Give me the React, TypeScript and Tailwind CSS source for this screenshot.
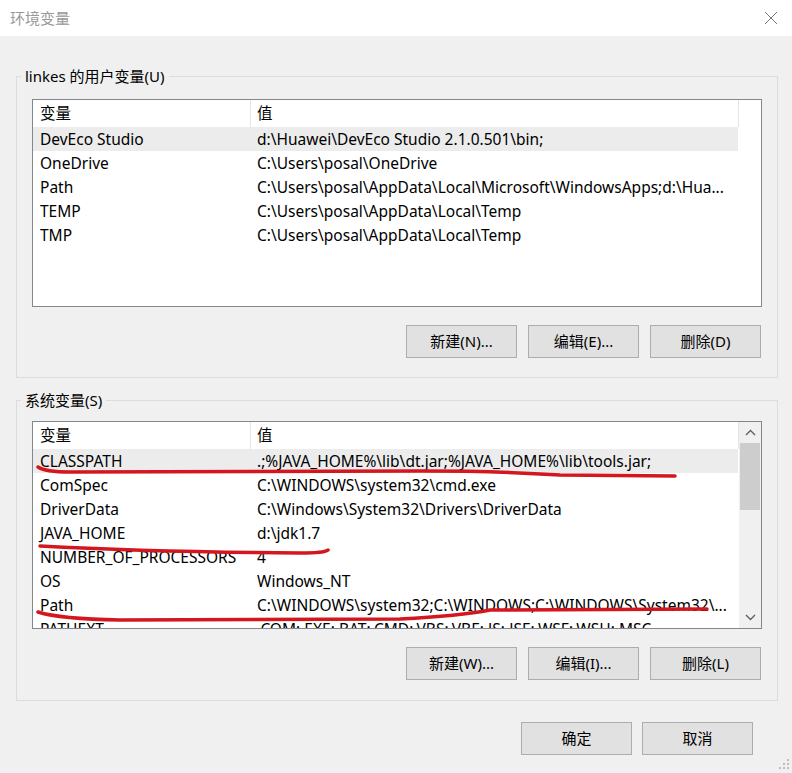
import React from "react";

type Item = { name: string; value: string; selected?: boolean };

const userVars: Item[] = [
  { name: "DevEco Studio", value: "d:\\Huawei\\DevEco Studio 2.1.0.501\\bin;", selected: true },
  { name: "OneDrive", value: "C:\\Users\\posal\\OneDrive" },
  { name: "Path", value: "C:\\Users\\posal\\AppData\\Local\\Microsoft\\WindowsApps;d:\\Hua..." },
  { name: "TEMP", value: "C:\\Users\\posal\\AppData\\Local\\Temp" },
  { name: "TMP", value: "C:\\Users\\posal\\AppData\\Local\\Temp" },
];

const sysVars: Item[] = [
  { name: "CLASSPATH", value: ".;%JAVA_HOME%\\lib\\dt.jar;%JAVA_HOME%\\lib\\tools.jar;", selected: true },
  { name: "ComSpec", value: "C:\\WINDOWS\\system32\\cmd.exe" },
  { name: "DriverData", value: "C:\\Windows\\System32\\Drivers\\DriverData" },
  { name: "JAVA_HOME", value: "d:\\jdk1.7" },
  { name: "NUMBER_OF_PROCESSORS", value: "4" },
  { name: "OS", value: "Windows_NT" },
  { name: "Path", value: "C:\\WINDOWS\\system32;C:\\WINDOWS;C:\\WINDOWS\\System32\\..." },
  { name: "PATHEXT", value: ".COM;.EXE;.BAT;.CMD;.VBS;.VBE;.JS;.JSE;.WSF;.WSH;.MSC" },
];

function Button({ label }: { label: string }) {
  return (
    <button className="h-[33px] w-[111px] shrink-0 border border-[#adadad] bg-[#e1e1e1] text-[15px] text-black">
      {label}
    </button>
  );
}

function Scrollbar() {
  return (
    <div className="flex w-[22px] shrink-0 flex-col bg-[#f0f0f0]">
      <div className="flex h-[21px] items-center justify-center">
        <svg width="11" height="7" viewBox="0 0 11 7">
          <path d="M1 6 L5.5 1.5 L10 6" fill="none" stroke="#606060" strokeWidth="1.4" />
        </svg>
      </div>
      <div className="mx-[1px] h-[67px] bg-[#cdcdcd]" />
      <div className="flex-1" />
      <div className="flex h-[21px] items-center justify-center">
        <svg width="11" height="7" viewBox="0 0 11 7">
          <path d="M1 1 L5.5 5.5 L10 1" fill="none" stroke="#606060" strokeWidth="1.4" />
        </svg>
      </div>
    </div>
  );
}

function ListView({ items, scroll }: { items: Item[]; scroll?: boolean }) {
  return (
    <div className="flex h-[208px] overflow-hidden border border-[#828790] bg-white text-[15.5px]">
      <div className="w-[705px] shrink-0">
        <div className="flex h-[27px]">
          <div className="flex w-[218px] shrink-0 items-center border-r border-[#e5e5e5] pl-[7px]">变量</div>
          <div className="flex w-[488px] shrink-0 items-center border-r border-[#e5e5e5] pl-[6px]">值</div>
        </div>
        {items.map((it) => (
          <div
            key={it.name}
            className={`flex h-6 items-center whitespace-nowrap pt-px ${it.selected ? "bg-[#ececec]" : ""}`}
          >
            <div className="w-[218px] shrink-0 overflow-hidden pl-[7px]">{it.name}</div>
            <div className="w-[487px] shrink-0 overflow-hidden pl-[6px]">{it.value}</div>
          </div>
        ))}
      </div>
      {scroll && <div className="ml-auto flex"><Scrollbar /></div>}
    </div>
  );
}

function Group({
  title,
  items,
  buttons,
  scroll,
  className,
}: {
  title: string;
  items: Item[];
  buttons: string[];
  scroll?: boolean;
  className: string;
}) {
  return (
    <fieldset className={`w-[762px] border border-[#dcdcdc] ${className}`}>
      <legend className="ml-[4px] px-[4px] text-[15px] leading-[20px] text-black">{title}</legend>
      <div className={`px-[15px] ${scroll ? "pt-[11px] pb-[20px]" : "pt-[13px] pb-[19px]"}`}>
        <ListView items={items} scroll={scroll} />
        <div className="mt-[18px] flex justify-end gap-[11px] pr-[1px]">
          {buttons.map((b) => (
            <Button key={b} label={b} />
          ))}
        </div>
      </div>
    </fieldset>
  );
}

export default function App() {
  return (
    <div className="relative h-[773px] w-[792px] overflow-hidden bg-[#f0f0f0] font-['Noto_Sans','Noto_Sans_CJK_SC',sans-serif] text-[15px] text-black">
      {/* title bar */}
      <div className="flex h-9 items-center justify-between bg-white pl-[10px] pr-[14px]">
        <span className="text-[15px] text-[#999999]">环境变量</span>
        <svg width="14" height="14" viewBox="0 0 14 14">
          <path d="M1 1 L13 13 M13 1 L1 13" stroke="#777777" strokeWidth="1" />
        </svg>
      </div>

      <div className="pl-4 pt-[30px]">
        <Group
          title="linkes 的用户变量(U)"
          items={userVars}
          buttons={["新建(N)...", "编辑(E)...", "删除(D)"]}
          className=""
        />
        <Group
          title="系统变量(S)"
          items={sysVars}
          buttons={["新建(W)...", "编辑(I)...", "删除(L)"]}
          scroll
          className="mt-[12px]"
        />
        <div className="mt-[21px] flex justify-end gap-[10px] pr-[39px]">
          <Button label="确定" />
          <Button label="取消" />
        </div>
      </div>

      {/* hand-drawn red marks */}
      <svg className="pointer-events-none absolute inset-0" width="792" height="773" viewBox="0 0 792 773">
        <g fill="none" stroke="#d4171e" strokeWidth="3.5" strokeLinecap="round">
          <path d="M38 467 Q45 472 70 472 L420 471 Q500 471 560 475 L675 476" />
          <path d="M40 546 Q150 552 300 553 Q325 553 328 550" />
          <path d="M38 612 Q60 619 120 620 L400 619 Q460 616 490 610 L707 609" />
        </g>
      </svg>

      {/* resize grip */}
      <svg className="absolute bottom-[3px] right-[2px]" width="12" height="12" viewBox="0 0 12 12">
        <g fill="#bdbdbd">
          <rect x="9" y="1" width="2" height="2" />
          <rect x="5" y="5" width="2" height="2" />
          <rect x="9" y="5" width="2" height="2" />
          <rect x="1" y="9" width="2" height="2" />
          <rect x="5" y="9" width="2" height="2" />
          <rect x="9" y="9" width="2" height="2" />
        </g>
      </svg>
    </div>
  );
}
